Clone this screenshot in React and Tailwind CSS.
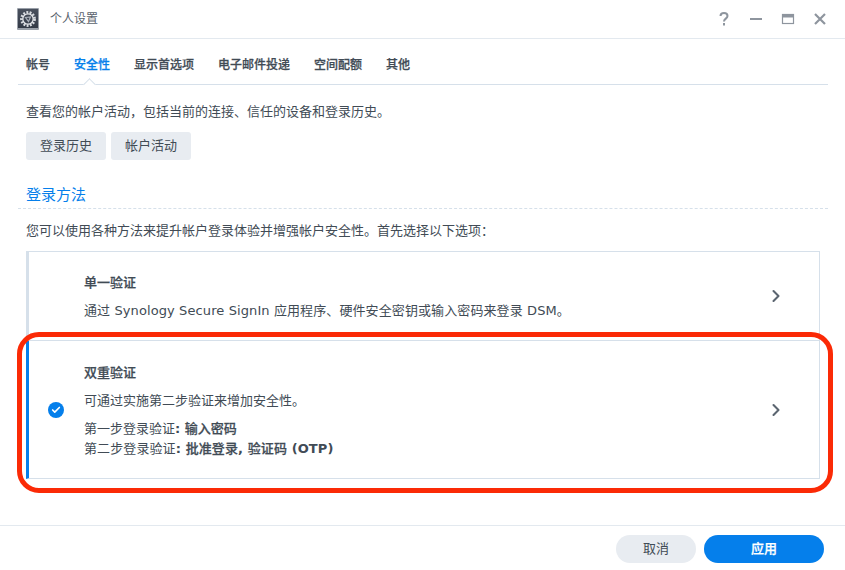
import { Check, ChevronRight } from 'lucide-react';

const tabs = ['帐号', '安全性', '显示首选项', '电子邮件投递', '空间配额', '其他'];

function GearIcon() {
  return (
    <div className="w-[22px] h-[22px] flex items-center justify-center bg-gradient-to-b from-[#4a515e] to-[#333a47] border border-[#9aa0a9] border-b-2 rounded-[1px]">
      <svg width="18" height="18" viewBox="0 0 18 18" fill="none">
        <circle cx="9" cy="9" r="6.6" stroke="#d9dce1" strokeWidth="2.6" strokeDasharray="1.9 1.35" />
        <circle cx="9" cy="9" r="5.2" stroke="#e4e6ea" strokeWidth="1.3" />
        <path d="M6.500 7.500l5 -.5 -2 4.500z" stroke="#aab0ba" strokeWidth="1.200" />
      </svg>
    </div>
  );
}

function WindowControls() {
  return (
    <div className="flex items-center gap-[16px] text-[#8e959e]">
      <svg width="16" height="16" viewBox="0 0 16 16" fill="none" stroke="currentColor" strokeWidth="2">
        <path d="M4.500 5c0-2 1.500-3 3.500-3s3.500 1 3.500 3c0 2.500-3.500 2.800-3.500 5.500" />
        <path d="M8 12v2.500" />
      </svg>
      <svg width="16" height="16" viewBox="0 0 16 16" fill="none" stroke="currentColor" strokeWidth="2">
        <path d="M2 8h12" />
      </svg>
      <svg width="16" height="16" viewBox="0 0 16 16" fill="none" stroke="currentColor">
        <rect x="2.500" y="3.500" width="11" height="9" strokeWidth="1.200" />
        <path d="M2 5h12" strokeWidth="3" />
      </svg>
      <svg width="16" height="16" viewBox="0 0 16 16" fill="none" stroke="currentColor" strokeWidth="2.200">
        <path d="M3 3l10 10M13 3L3 13" />
      </svg>
    </div>
  );
}

function Chevron() {
  return <ChevronRight className="w-[20px] h-[20px] mr-[33px] text-[#5b6570]" strokeWidth={2.5} />;
}

function App() {
  return (
    <div className="relative w-[845px] h-[570px] bg-white overflow-hidden text-[#414b55] text-[13px] font-['DejaVu_Sans','Noto_Sans_CJK_SC',sans-serif]">
      {/* Title bar */}
      <div className="h-[39px] flex items-center justify-between pl-[17px] pr-[17px] border-b border-[#e3e9ef]">
        <div className="flex items-center gap-[11px]">
          <GearIcon />
          <span className="text-[#5a636d] text-[12px]">个人设置</span>
        </div>
        <WindowControls />
      </div>

      {/* Tabs */}
      <div className="ml-[18px] mr-[17px] mt-[16px] h-[30px] flex gap-[24px] pl-[8px] border-b border-[#d6e0ea] relative font-medium [-webkit-text-stroke:0.25px] text-[12px]">
        {tabs.map((tab, i) => (
          <span key={tab} className={i === 1 ? 'text-[#057feb] leading-[20px]' : 'text-[#414b55] leading-[20px]'}>
            {tab}
          </span>
        ))}
        <div className="absolute left-[67px] top-[25px] w-[9px] h-[9px] rotate-45 bg-white border-l border-t border-[#d6e0ea]" />
      </div>

      <div className="px-[26px] pt-[17px] leading-[20px]">
        <p>查看您的帐户活动，包括当前的连接、信任的设备和登录历史。</p>
        <div className="flex gap-[5px] mt-[10px]">
          <button className="w-[80px] h-[28px] rounded-[3px] bg-[#e8ecf1] text-[#414b55]">登录历史</button>
          <button className="w-[80px] h-[28px] rounded-[3px] bg-[#e8ecf1] text-[#414b55]">帐户活动</button>
        </div>
      </div>

      {/* Section */}
      <div className="ml-[18px] mr-[17px] mt-[23px] pl-[8px] h-[26px] border-b border-dashed border-[#d6e0ea] text-[#057feb] text-[15px] leading-[24px]">
        登录方法
      </div>

      <p className="px-[26px] mt-[12px] leading-[20px]">您可以使用各种方法来提升帐户登录体验并增强帐户安全性。首先选择以下选项：</p>

      {/* Options */}
      <div className="ml-[26px] mr-[25px] mt-[10px] flex flex-col">
        <div className="h-[90px] flex items-center border border-l-[3px] border-[#d6e0ea] border-l-[#d6e0ea]">
          <div className="flex-1 pl-[55px] pt-[2px]">
            <div className="font-medium [-webkit-text-stroke:0.25px] leading-[20px]">单一验证</div>
            <div className="mt-[8px] leading-[20px] tracking-[0.1px]">通过 Synology Secure SignIn 应用程序、硬件安全密钥或输入密码来登录 DSM。</div>
          </div>
          <Chevron />
        </div>
        <div className="h-[138px] flex items-center border border-t-0 border-l-[3px] border-[#d6e0ea] border-l-[#057feb]">
          <div className="w-[16px] h-[16px] ml-[19px] rounded-full bg-[#057feb] flex items-center justify-center">
            <Check className="w-[10px] h-[10px] text-white" strokeWidth={4} />
          </div>
          <div className="flex-1 pl-[20px] pt-[2px]">
            <div className="font-medium [-webkit-text-stroke:0.25px] leading-[20px]">双重验证</div>
            <div className="mt-[8px] leading-[20px]">可通过实施第二步验证来增加安全性。</div>
            <div className="mt-[8px] leading-[20px]">第一步登录验证<span className="font-bold">: </span><span className="font-medium [-webkit-text-stroke:0.25px]">输入密码</span></div>
            <div className="leading-[20px] tracking-[0.1px]">第二步登录验证<span className="font-bold">: </span><span className="font-medium [-webkit-text-stroke:0.25px]">批准登录</span><span className="font-bold">, </span><span className="font-medium [-webkit-text-stroke:0.25px]">验证码</span><span className="font-bold"> (OTP)</span></div>
          </div>
          <Chevron />
        </div>
      </div>

      {/* Footer */}
      <div className="absolute bottom-0 left-0 right-0 h-[45px] border-t border-[#e3e9ef] flex justify-end items-start gap-[8px] pt-[9px] pr-[21px]">
        <button className="w-[80px] h-[28px] rounded-full bg-[#e8ecf1] text-[#414b55]">取消</button>
        <button className="w-[120px] h-[28px] rounded-full bg-[#057feb] text-white font-medium [-webkit-text-stroke:0.25px]">应用</button>
      </div>

      {/* Annotation outline drawn over the screenshot */}
      <div className="absolute left-[17px] top-[332px] w-[816px] h-[161px] border-[5px] border-[#fb2a06] rounded-[22px] pointer-events-none" />
    </div>
  );
}

export default App;
